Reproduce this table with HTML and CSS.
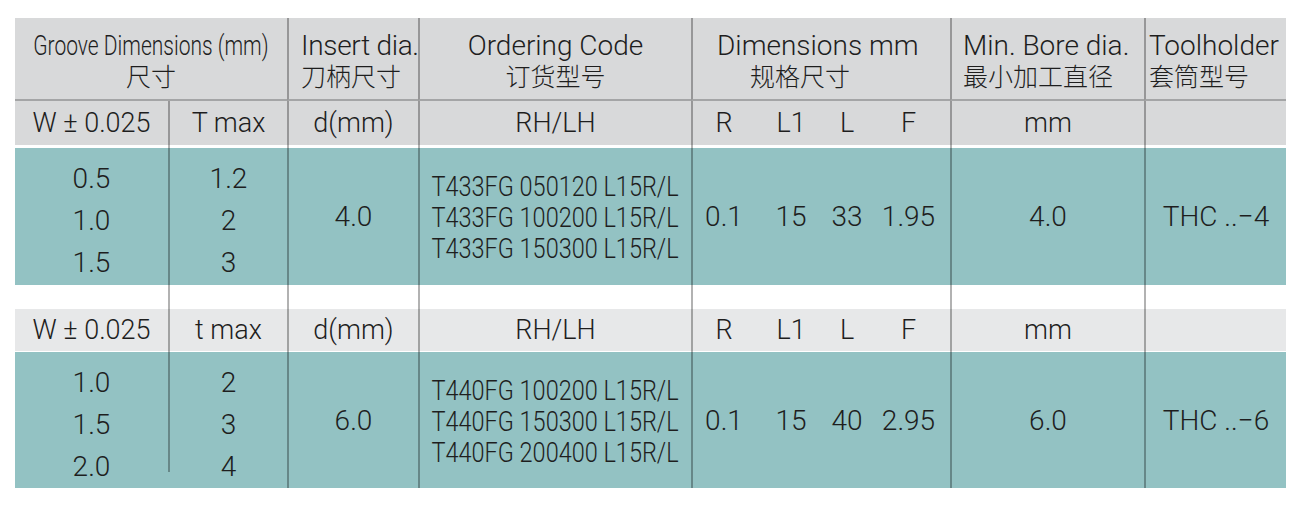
FILE: index.html
```html
<!DOCTYPE html>
<html lang="zh-CN">
<head>
<meta charset="utf-8">
<title>Grooving inserts T433FG / T440FG</title>
<link rel="stylesheet" href="styles.css">
</head>
<body>
<div class="sheet">
  <!-- header -->
  <div class="c hd first span2"><span class="en cond">Groove Dimensions (mm)</span><span class="zh">尺寸</span></div>
  <div class="c hd start pad-insert"><span class="en tight">Insert dia.</span><span class="zh">刀柄尺寸</span></div>
  <div class="c hd"><span class="en">Ordering Code</span><span class="zh">订货型号</span></div>
  <div class="c hd start pad-dims"><span class="en">Dimensions mm</span><span class="zh indent">规格尺寸</span></div>
  <div class="c hd start pad-bore"><span class="en">Min. Bore dia.</span><span class="zh">最小加工直径</span></div>
  <div class="c hd start pad-holder"><span class="en">Toolholder</span><span class="zh">套筒型号</span></div>

  <!-- sub header 1 -->
  <div class="c sub first">W ± 0.025</div>
  <div class="c sub">T max</div>
  <div class="c sub">d(mm)</div>
  <div class="c sub">RH/LH</div>
  <div class="c sub"><div class="dims"><span>R</span><span>L1</span><span>L</span><span>F</span></div></div>
  <div class="c sub">mm</div>
  <div class="c sub"></div>

  <div class="c gap first"></div><div class="c gap"></div><div class="c gap"></div><div class="c gap"></div><div class="c gap"></div><div class="c gap"></div><div class="c gap"></div>

  <!-- data 1 -->
  <div class="c teal first stack"><span>0.5</span><span>1.0</span><span>1.5</span></div>
  <div class="c teal stack"><span>1.2</span><span>2</span><span>3</span></div>
  <div class="c teal val">4.0</div>
  <div class="c teal"><div class="codes"><span>T433FG 050120 L15R/L</span><span>T433FG 100200 L15R/L</span><span>T433FG 150300 L15R/L</span></div></div>
  <div class="c teal"><div class="dims val"><span>0.1</span><span>15</span><span>33</span><span>1.95</span></div></div>
  <div class="c teal val">4.0</div>
  <div class="c teal val">THC ..−4</div>

  <div class="c gap first"></div><div class="c gap"></div><div class="c gap"></div><div class="c gap"></div><div class="c gap"></div><div class="c gap"></div><div class="c gap"></div>

  <!-- sub header 2 -->
  <div class="c sub light first">W ± 0.025</div>
  <div class="c sub light">t max</div>
  <div class="c sub light">d(mm)</div>
  <div class="c sub light">RH/LH</div>
  <div class="c sub light"><div class="dims"><span>R</span><span>L1</span><span>L</span><span>F</span></div></div>
  <div class="c sub light">mm</div>
  <div class="c sub light"></div>

  <div class="c gap first"></div><div class="c gap"></div><div class="c gap"></div><div class="c gap"></div><div class="c gap"></div><div class="c gap"></div><div class="c gap"></div>

  <!-- data 2 -->
  <div class="c teal first stack"><span>1.0</span><span>1.5</span><span>2.0</span></div>
  <div class="c teal stack short-rule"><span>2</span><span>3</span><span>4</span></div>
  <div class="c teal val">6.0</div>
  <div class="c teal"><div class="codes"><span>T440FG 100200 L15R/L</span><span>T440FG 150300 L15R/L</span><span>T440FG 200400 L15R/L</span></div></div>
  <div class="c teal"><div class="dims val"><span>0.1</span><span>15</span><span>40</span><span>2.95</span></div></div>
  <div class="c teal val">6.0</div>
  <div class="c teal val">THC ..−6</div>
</div>
</body>
</html>
```

FILE: styles.css
```css
html, body {
  margin: 0;
  background: #ffffff;
}

body {
  padding: 18px 0 0 15px;
  font-family: Roboto, "Liberation Sans", Arial, "Noto Sans CJK SC", sans-serif;
  font-weight: 300;
  color: #1e1e1e;
}

.sheet {
  display: grid;
  grid-template-columns: 153px 119px 131px 273px 259px 194px 142px;
  grid-template-rows: 83px 44px 3px 137px 24px 42px 1px 136px;
  width: 1271px;
}

.c {
  box-sizing: border-box;
  border-left: 2px solid rgba(0, 0, 0, 0.3);
  display: flex;
  flex-direction: column;
  justify-content: center;
  align-items: center;
  white-space: nowrap;
  font-size: 27px;
  min-width: 0;
}

.c.first {
  border-left: none;
}

.span2 {
  grid-column: span 2;
}

/* header */
.hd {
  background: #d8d9da;
  border-bottom: 2px solid #a4a5a6;
  padding-top: 6px;
}

.hd.start {
  align-items: flex-start;
}

.pad-insert { padding-left: 12px; }
.pad-dims { padding-left: 24px; }
.pad-bore { padding-left: 11px; }
.pad-holder { padding-left: 3px; }

.indent { margin-left: 33px; }

.en {
  font-size: 28px;
  line-height: 32px;
}

.tight {
  letter-spacing: -0.3px;
}

.cond {
  display: inline-block;
  transform: scaleX(0.75);
}

.zh {
  font-family: Roboto, "Noto Sans CJK SC", "Noto Sans CJK TC", sans-serif;
  font-weight: 300;
  font-size: 25px;
  line-height: 32px;
}

/* sub headers */
.sub {
  background: #d8d9da;
}

.sub.light {
  background: #e7e8e9;
}

.gap {
  background: #ffffff;
}

/* data */
.teal {
  background: #93c2c3;
}

.val {
  font-size: 28px;
}

.stack {
  justify-content: flex-start;
  padding-top: 10px;
  font-size: 28px;
  line-height: 42px;
}

.stack span {
  display: block;
}

.short-rule {
  border-left-color: transparent;
  background:
    linear-gradient(rgba(0, 0, 0, 0.3), rgba(0, 0, 0, 0.3)) left top / 2px 120px no-repeat border-box,
    #93c2c3;
}

.codes {
  display: flex;
  flex-direction: column;
  align-items: flex-start;
  font-size: 27px;
  line-height: 31px;
  transform: scaleX(0.87);
  padding-top: 4px;
}

.dims {
  display: grid;
  grid-template-columns: 62px 72px 40px 83px;
  justify-items: center;
  align-items: center;
  width: 100%;
}
```
